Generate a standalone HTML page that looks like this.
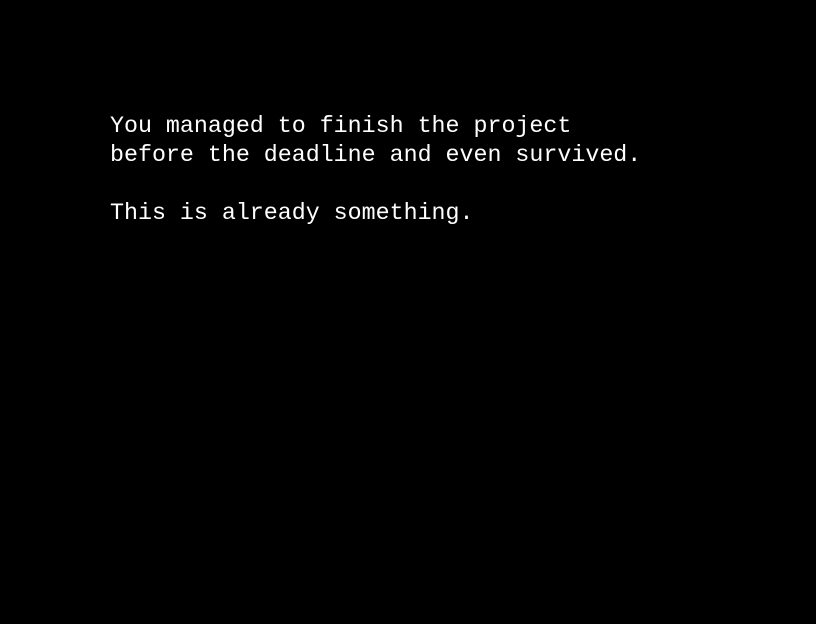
<!DOCTYPE html>
<html><head><meta charset="utf-8"><style>
html,body{margin:0;padding:0;background:#000;width:816px;height:624px;overflow:hidden}
pre{position:absolute;left:110px;top:112px;margin:0;color:#fff;font-family:"Liberation Mono",monospace;font-size:23.3px;line-height:29px}
</style></head><body>
<pre>You managed to finish the project
before the deadline and even survived.

This is already something.</pre>
</body></html>
